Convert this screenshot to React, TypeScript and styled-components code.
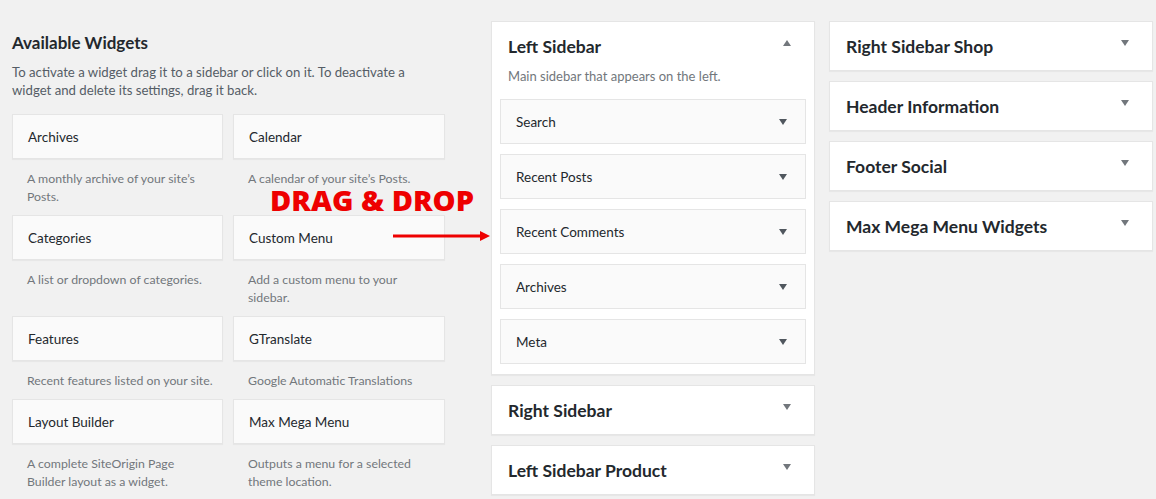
import React from "react";
import styled, { createGlobalStyle } from "styled-components";

const Global = createGlobalStyle`
  html, body { margin: 0; padding: 0; background: #f1f1f1; }
  body {
    font-family: Lato, "Noto Sans", sans-serif;
    color: #23282d;
    font-size: 13px;
    width: 1156px;
    height: 499px;
    overflow: hidden;
  }
`;

const Page = styled.div`
  display: flex;
  align-items: flex-start;
  padding: 21px 0 0 12px;
  position: relative;
`;

const LeftCol = styled.div`
  width: 434px;
  display: flex;
  flex-direction: column;
`;

const Heading = styled.h2`
  margin: 12px 0 0;
  font-size: 17px;
  font-weight: 700;
  line-height: 20px;
  color: #23282d;
`;

const Intro = styled.p`
  margin: 10px 0 0;
  font-size: 13.2px;
  line-height: 18px;
  color: #555d66;
`;

const Line = styled.span`
  display: block;
  white-space: nowrap;
`;

const WidgetGrid = styled.div`
  display: grid;
  grid-template-columns: 211px 212px;
  column-gap: 10px;
  margin-top: 15px;
`;

const WidgetItem = styled.div`
  display: flex;
  flex-direction: column;
`;

const WidgetCard = styled.div`
  box-sizing: border-box;
  height: 45px;
  background: #fafafa;
  border: 1px solid #e5e5e5;
  box-shadow: 0 1px 1px rgba(0, 0, 0, 0.04);
  padding: 0 15px;
  display: flex;
  align-items: center;
  font-size: 13.5px;
  color: #23282d;
`;

const WidgetDesc = styled.div`
  padding: 11px 0 9px 15px;
  font-size: 12.3px;
  line-height: 18px;
  color: #72777c;
`;

const PanelCol = styled.div<{ $ml: number }>`
  width: 324px;
  margin-left: ${(p) => p.$ml}px;
  display: flex;
  flex-direction: column;
  gap: 10px;
`;

const Panel = styled.div`
  box-sizing: border-box;
  background: #fff;
  border: 1px solid #e5e5e5;
  box-shadow: 0 1px 1px rgba(0, 0, 0, 0.04);
`;

const PanelHead = styled.div`
  display: flex;
  justify-content: space-between;
  align-items: flex-start;
  padding: 0 23px 0 16px;
  height: 48px;
`;

const PanelTitle = styled.h2`
  margin: 14px 0 0;
  font-size: 17.5px;
  font-weight: 700;
  line-height: 22px;
  color: #23282d;
`;

const Caret = styled.span<{ $up?: boolean }>`
  width: 0;
  height: 0;
  margin-top: 18px;
  border-left: 4px solid transparent;
  border-right: 4px solid transparent;
  ${(p) => (p.$up ? `border-bottom: 6px solid #72777c;` : `border-top: 6px solid #72777c;`)}
`;

const PanelDesc = styled.div`
  margin: -3px 0 0;
  padding: 0 16px;
  font-size: 13px;
  line-height: 18px;
  color: #72777c;
`;

const InnerList = styled.div`
  display: flex;
  flex-direction: column;
  gap: 10px;
  padding: 14px 8px 10px;
`;

const InnerWidget = styled.div`
  box-sizing: border-box;
  height: 45px;
  background: #fafafa;
  border: 1px solid #e5e5e5;
  display: flex;
  align-items: center;
  justify-content: space-between;
  padding: 0 18px 0 15px;
  font-size: 13.5px;
  color: #23282d;
`;

const InnerCaret = styled.span`
  width: 0;
  height: 0;
  border-left: 4px solid transparent;
  border-right: 4px solid transparent;
  border-top: 6px solid #50575e;
`;

const DragLabel = styled.div`
  position: absolute;
  left: 270px;
  top: 186px;
  font-family: "Open Sans", "Noto Sans", sans-serif;
  font-weight: 800;
  font-size: 29px;
  line-height: 28px;
  color: #ee0000;
`;

const Arrow = styled.svg`
  position: absolute;
  left: 392px;
  top: 230px;
`;

const widgets: [string, string[]][] = [
  ["Archives", ["A monthly archive of your site\u2019s", "Posts."]],
  ["Calendar", ["A calendar of your site\u2019s Posts."]],
  ["Categories", ["A list or dropdown of categories."]],
  ["Custom Menu", ["Add a custom menu to your", "sidebar."]],
  ["Features", ["Recent features listed on your site."]],
  ["GTranslate", ["Google Automatic Translations"]],
  ["Layout Builder", ["A complete SiteOrigin Page", "Builder layout as a widget."]],
  ["Max Mega Menu", ["Outputs a menu for a selected", "theme location."]],
];

const inner = ["Search", "Recent Posts", "Recent Comments", "Archives", "Meta"];

const ClosedPanel = ({ title }: { title: string }) => (
  <Panel>
    <PanelHead>
      <PanelTitle>{title}</PanelTitle>
      <Caret />
    </PanelHead>
  </Panel>
);

export default function App() {
  return (
    <>
      <Global />
      <Page>
        <LeftCol>
          <Heading>Available Widgets</Heading>
          <Intro>
            <Line>To activate a widget drag it to a sidebar or click on it. To deactivate a</Line>
            <Line>widget and delete its settings, drag it back.</Line>
          </Intro>
          <WidgetGrid>
            {widgets.map(([name, lines]) => (
              <WidgetItem key={name}>
                <WidgetCard>{name}</WidgetCard>
                <WidgetDesc>
                  {lines.map((l) => (
                    <Line key={l}>{l}</Line>
                  ))}
                </WidgetDesc>
              </WidgetItem>
            ))}
          </WidgetGrid>
        </LeftCol>

        <PanelCol $ml={45}>
          <Panel>
            <PanelHead>
              <PanelTitle>Left Sidebar</PanelTitle>
              <Caret $up />
            </PanelHead>
            <PanelDesc>Main sidebar that appears on the left.</PanelDesc>
            <InnerList>
              {inner.map((n) => (
                <InnerWidget key={n}>
                  {n}
                  <InnerCaret />
                </InnerWidget>
              ))}
            </InnerList>
          </Panel>
          <ClosedPanel title="Right Sidebar" />
          <ClosedPanel title="Left Sidebar Product" />
        </PanelCol>

        <PanelCol $ml={14}>
          <ClosedPanel title="Right Sidebar Shop" />
          <ClosedPanel title="Header Information" />
          <ClosedPanel title="Footer Social" />
          <ClosedPanel title="Max Mega Menu Widgets" />
        </PanelCol>

        <DragLabel>DRAG &amp; DROP</DragLabel>
        <Arrow width="100" height="14" viewBox="0 0 100 14">
          <line x1="1" y1="6" x2="90" y2="6" stroke="#ee0000" strokeWidth="3" />
          <polygon points="88,1 98,6 88,11" fill="#ee0000" />
        </Arrow>
      </Page>
    </>
  );
}
